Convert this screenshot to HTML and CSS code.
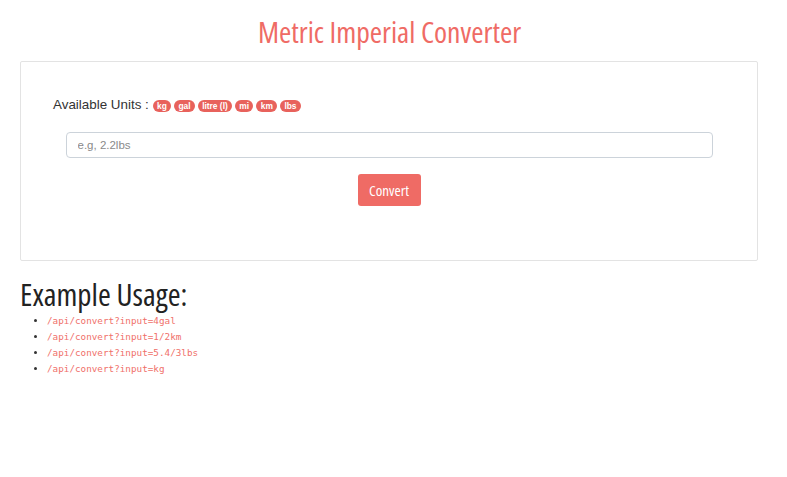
FILE: index.html
```html
<!DOCTYPE html>
<html>
<head>
<meta charset="utf-8">
<link rel="stylesheet" href="styles.css">
</head>
<body>
<div class="page">
  <h1 class="title">Metric Imperial Converter</h1>
  <div class="card">
    <div class="units">
      <span class="units-label">Available Units :</span>
      <span class="badge">kg</span>
      <span class="badge">gal</span>
      <span class="badge">litre (l)</span>
      <span class="badge">mi</span>
      <span class="badge">km</span>
      <span class="badge">lbs</span>
    </div>
    <div class="form">
      <input class="input" type="text" placeholder="e.g, 2.2lbs">
      <button class="btn">Convert</button>
    </div>
  </div>
  <h2 class="sub">Example Usage:</h2>
  <ul class="examples">
    <li><code>/api/convert?input=4gal</code></li>
    <li><code>/api/convert?input=1/2km</code></li>
    <li><code>/api/convert?input=5.4/3lbs</code></li>
    <li><code>/api/convert?input=kg</code></li>
  </ul>
</div>
</body>
</html>
```
FILE: styles.css
```css
html, body { margin: 0; padding: 0; background: #fff; }
body {
  font-family: "Liberation Sans", Arial, sans-serif;
  color: #333;
}
.page {
  width: 779px;
}
.title {
  margin: 14px 0 0 0;
  text-align: center;
  font-family: "Open Sans", sans-serif;
  font-stretch: 75%;
  font-weight: 500;
  font-size: 29.7px;
  line-height: 36px;
  color: #ef6b65;
}
.card {
  margin: 11px 0 0 20px;
  width: 736px;
  height: 198px;
  border: 1px solid #e3e3e3;
  border-radius: 2px;
}
.units {
  display: flex;
  align-items: center;
  gap: 3px;
  margin: 35px 0 0 32px;
}
.units-label {
  font-size: 13.4px;
  color: #333;
  margin-right: 1px;
}
.badge {
  display: inline-block;
  background: #e8625c;
  color: #fff;
  font-size: 8.4px;
  font-weight: bold;
  line-height: 12px;
  padding: 0 4.3px;
  border-radius: 6px;
  margin-top: 3px;
}
.form {
  display: flex;
  flex-direction: column;
  align-items: center;
  margin-top: 20px;
}
.input {
  box-sizing: border-box;
  width: 647px;
  height: 26px;
  border: 1px solid #ccd3da;
  border-radius: 4px;
  padding: 0 11px;
  font-family: "Liberation Sans", Arial, sans-serif;
  font-size: 11.5px;
  color: #555;
  outline: none;
}
.input::placeholder { color: #8a8a8a; }
.btn {
  margin-top: 16px;
  width: 63px;
  height: 32px;
  border: none;
  border-radius: 3px;
  background: #ef6b65;
  color: #fff;
  font-family: "Open Sans", sans-serif;
  font-stretch: 75%;
  font-weight: 500;
  font-size: 15px;
  padding: 0;
}
.sub {
  margin: 16px 0 0 20px;
  font-family: "Open Sans", sans-serif;
  font-stretch: 75%;
  font-weight: 500;
  font-size: 31px;
  line-height: 34px;
  color: #222;
}
.examples {
  margin: 2px 0 0 0;
  padding-left: 47px;
  font-family: "DejaVu Sans Mono", monospace;
  font-size: 9.3px;
  line-height: 16px;
}
.examples code {
  font-family: "DejaVu Sans Mono", monospace;
  font-size: 9.3px;
  color: #f0706a;
}
```
